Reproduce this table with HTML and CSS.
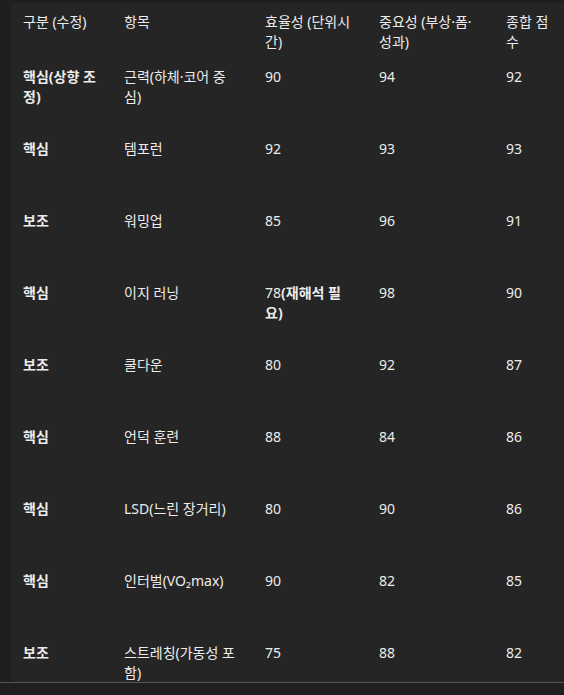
FILE: index.html
```html
<!DOCTYPE html>
<html lang="ko">
<head>
<meta charset="utf-8">
<link rel="stylesheet" href="styles.css">
</head>
<body>
<div class="frame">
  <div class="scroller">
    <table class="grid">
      <colgroup>
        <col class="c1"><col class="c2"><col class="c3"><col class="c4"><col class="c5">
      </colgroup>
      <thead>
        <tr><th>구분 (수정)</th><th>항목</th><th>효율성 (단위시간)</th><th>중요성 (부상·폼·성과)</th><th>종합 점수</th></tr>
      </thead>
      <tbody>
        <tr><td class="b">핵심(상향 조정)</td><td>근력(하체·코어 중심)</td><td>90</td><td>94</td><td>92</td></tr>
        <tr><td class="b">핵심</td><td>템포런</td><td>92</td><td>93</td><td>93</td></tr>
        <tr><td class="b">보조</td><td>워밍업</td><td>85</td><td>96</td><td>91</td></tr>
        <tr><td class="b">핵심</td><td>이지 러닝</td><td>78<span class="b">(재해석 필요)</span></td><td>98</td><td>90</td></tr>
        <tr><td class="b">보조</td><td>쿨다운</td><td>80</td><td>92</td><td>87</td></tr>
        <tr><td class="b">핵심</td><td>언덕 훈련</td><td>88</td><td>84</td><td>86</td></tr>
        <tr><td class="b">핵심</td><td>LSD(느린 장거리)</td><td>80</td><td>90</td><td>86</td></tr>
        <tr><td class="b">핵심</td><td>인터벌(VO₂max)</td><td>90</td><td>82</td><td>85</td></tr>
        <tr><td class="b">보조</td><td>스트레칭(가동성 포함)</td><td>75</td><td>88</td><td>82</td></tr>
      </tbody>
    </table>
  </div>
</div>
<div class="footer"></div>
</body>
</html>
```

FILE: styles.css
```css
html, body {
  margin: 0;
  padding: 0;
  background: #1f1f1f;
}
body {
  font-family: "Noto Sans", "Noto Sans CJK KR", sans-serif;
  font-size: 14px;
  line-height: 20px;
  color: #ececec;
  width: 564px;
  height: 695px;
  overflow: hidden;
}
.frame {
  padding: 3px 0 0 11px;
}
.scroller {
  height: 679px;
  overflow: hidden;
  background: #252525;
}
.footer {
  border-top: 1px solid #555555;
  height: 12px;
  background: #1f1f1f;
}
.grid {
  border-collapse: collapse;
  table-layout: fixed;
  width: 553px;
}
.c1 { width: 101px; }
.c2 { width: 141px; }
.c3 { width: 114px; }
.c4 { width: 127px; }
.c5 { width: 70px; }
.grid th {
  text-align: left;
  font-weight: normal;
  vertical-align: top;
  padding: 9px 12px 3px 12px;
}
.grid td {
  vertical-align: top;
  padding: 12px 12px 0 12px;
  height: 60px;
}
.b {
  font-weight: bold;
}
```
